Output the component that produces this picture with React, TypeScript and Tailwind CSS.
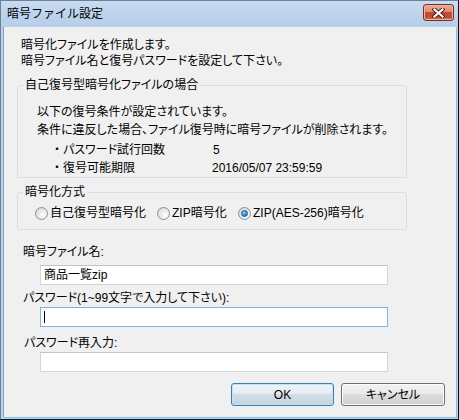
import type { ReactNode } from "react";

function Radio({ checked, label, width }: { checked?: boolean; label: string; width?: string }) {
  return (
    <label className={`flex items-center gap-[2px] ${width ?? ""}`}>
      <span className="flex h-[13px] w-[13px] shrink-0 items-center justify-center rounded-full border border-[#8e8f8f] bg-[radial-gradient(circle_at_65%_65%,#ffffff,#e6e6e6_55%,#c9c9c9)]">
        {checked && (
          <span className="h-[7px] w-[7px] rounded-full border border-[#1a5a91] bg-[radial-gradient(circle_at_40%_35%,#9ad8ff,#2b8ed6_55%,#0b4f8e)]" />
        )}
      </span>
      <span>{label}</span>
    </label>
  );
}

function Group({ title, children, className }: { title: string; children: ReactNode; className?: string }) {
  return (
    <fieldset className={`ml-[13px] w-[390px] rounded-[3px] border border-[#d5dfe5] px-0 ${className ?? ""}`}>
      <legend className="ml-[5px] px-[2px] leading-[16px]">{title}</legend>
      {children}
    </fieldset>
  );
}

function Field({ children, focused }: { children?: ReactNode; focused?: boolean }) {
  return (
    <div
      className={`ml-[36px] flex h-[20px] w-[348px] items-center border bg-white pl-[3px] ${
        focused ? "border-[#7eb4ea]" : "border-[#d3d6db] border-t-[#c1c4c9]"
      }`}
    >
      {children}
    </div>
  );
}

function Button({ children, primary }: { children: ReactNode; primary?: boolean }) {
  return (
    <button
      className={`flex h-[23px] items-center justify-center rounded-[3px] border ${
        primary
          ? "w-[103px] border-[#3c7fb1] bg-[linear-gradient(#f0f4f7,#e6ecf1_45%,#d4dde5_50%,#c8d3dc)] shadow-[inset_0_0_0_1px_#b9e5fb]"
          : "w-[104px] border-[#707070] bg-[linear-gradient(#f2f2f2,#ebebeb_45%,#dddddd_50%,#cfcfcf)] shadow-[inset_0_0_0_1px_#fcfcfc]"
      }`}
    >
      {children}
    </button>
  );
}

export default function App() {
  return (
    <div className="flex h-[420px] w-[459px] flex-col border border-[#6d8099] border-r-[#111] border-b-[#111] bg-[#bcd3ec] font-['Liberation_Sans','Noto_Sans_CJK_JP',sans-serif] text-[12px] leading-[16px] text-black">
      <div className="flex h-[26px] shrink-0 items-center justify-between bg-[linear-gradient(#c9dcf0,#bfd5ed_40%,#b6cee9)] pl-[6px] pr-[4px]">
        <span className="text-[12px]">暗号ファイル設定</span>
        <div className="flex h-[17px] w-[31px] items-center justify-center self-start mt-[3px] rounded-[3px] border border-[#7a2d22] bg-[linear-gradient(#e9ab98,#dd8a72_45%,#c5472f_50%,#c44a31_80%,#d9775c)] shadow-[inset_0_0_0_1px_#eab5a6]">
          <svg width="13" height="10" viewBox="0 0 13 10">
            <path d="M2.5 1.5 L10.5 8.5 M10.5 1.5 L2.5 8.5" stroke="#4b1b12" strokeWidth="4" strokeLinecap="square" />
            <path d="M2.5 1.5 L10.5 8.5 M10.5 1.5 L2.5 8.5" stroke="#ffffff" strokeWidth="2.2" strokeLinecap="square" />
          </svg>
        </div>
      </div>

      <div className="mb-[2px] ml-[2px] mr-[2px] flex-1 border-l border-[#8aa4c2] bg-[#f0f0f0] shadow-[1px_1px_0_#6fcaf0] [font-feature-settings:'palt']">
        <div className="pl-[17px] pt-[10px]">
          <p>暗号化ファイルを作成します。</p>
          <p>暗号ファイル名と復号パスワードを設定して下さい。</p>
        </div>

        <Group title="自己復号型暗号化ファイルの場合" className="mt-[8px]">
          <div className="pl-[19px] pt-[10px]">
            <p className="h-[18px] leading-[18px]">以下の復号条件が設定されています。</p>
            <p className="h-[18px] leading-[18px]">条件に違反した場合、ファイル復号時に暗号ファイルが削除されます。</p>
            <div className="mt-[2px] flex h-[18px] items-center pl-[14px] leading-[18px]">
              <span className="w-[12px] text-center">・</span>
              <span className="w-[149px]">パスワード試行回数</span>
              <span className="pl-[1px]">5</span>
            </div>
            <div className="flex h-[18px] items-center pl-[14px] leading-[18px]">
              <span className="w-[12px] text-center">・</span>
              <span className="w-[149px]">復号可能期限</span>
              <span>2016/05/07 23:59:59</span>
            </div>
          </div>
        </Group>

        <Group title="暗号化方式" className="mt-[6px]">
          <div className="flex h-[16px] items-center pl-[17px] mt-[5px] mb-[8px]">
            <Radio label="自己復号型暗号化" width="w-[122px]" />
            <Radio label="ZIP暗号化" width="w-[81px]" />
            <Radio label="ZIP(AES-256)暗号化" checked />
          </div>
        </Group>

        <p className="mt-[14px] pl-[19px]">暗号ファイル名:</p>
        <div className="mt-[5px]">
          <Field>商品一覧zip</Field>
        </div>

        <p className="mt-[5px] pl-[19px]">パスワード(1~99文字で入力して下さい):</p>
        <div className="mt-[1px]">
          <Field focused>
            <span className="h-[12px] w-px bg-black" />
          </Field>
        </div>

        <p className="mt-[8px] pl-[20px]">パスワード再入力:</p>
        <div className="mt-[1px]">
          <Field />
        </div>

        <div className="mt-[11px] flex gap-[7px] pl-[227px]">
          <Button primary>OK</Button>
          <Button>キャンセル</Button>
        </div>
      </div>
    </div>
  );
}
